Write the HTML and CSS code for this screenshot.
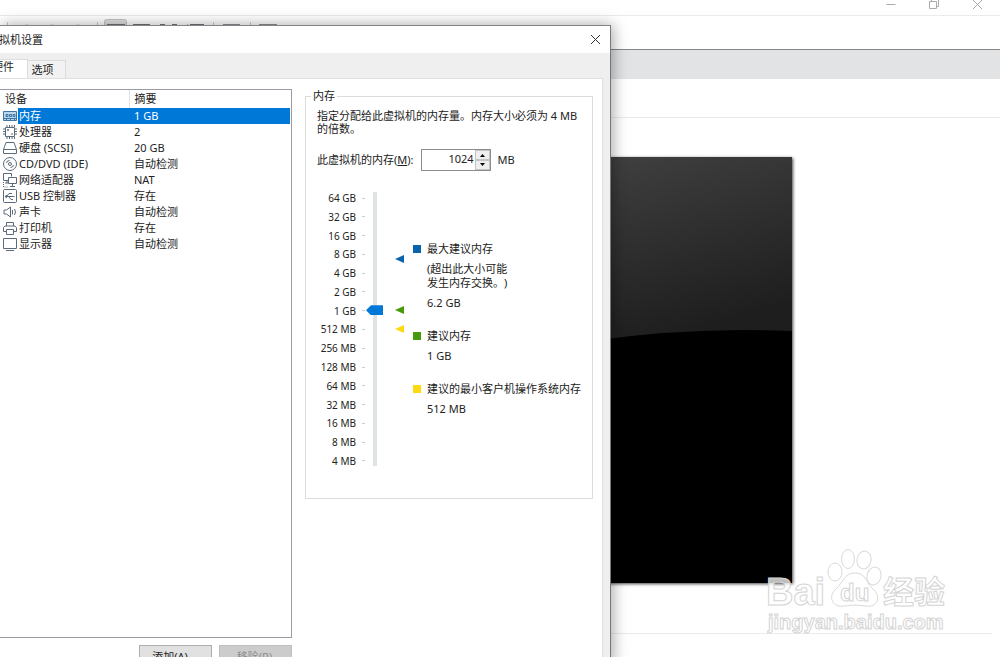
FILE: index.html
```html
<!DOCTYPE html>
<html lang="zh-CN">
<head>
<meta charset="utf-8">
<title>虚拟机设置</title>
<link rel="stylesheet" href="styles.css">
</head>
<body>
<div class="app">
  <header class="app-title">
    <button class="win-btn" aria-label="最小化"><svg width="12" height="12" viewBox="0 0 12 12"><path d="M1.500 4.500h9"/></svg></button>
    <button class="win-btn" aria-label="还原"><svg width="12" height="12" viewBox="0 0 12 12"><path d="M1.500 1.500h7v7h-7zM3.500 1.500v-2h7v7h-2"/></svg></button>
    <button class="win-btn" aria-label="关闭"><svg width="12" height="12" viewBox="0 0 12 12"><path d="M2 0l9 9M11 0l-9 9"/></svg></button>
  </header>
  <div class="toolbar">
    <svg width="300" height="28" viewBox="0 0 300 28">
      <rect x="104.500" y="3.500" width="22" height="24" rx="2" fill="#dedede" stroke="#c4c4c4"/>
      <g fill="none" stroke="#c8c8c8"><path d="M7.500 6v16M97.500 6v16M213.500 6v16M250.500 6v16"/><circle cx="27" cy="14" r="5"/><circle cx="52" cy="14" r="5"/><circle cx="78" cy="14" r="5"/></g>
      <g fill="none" stroke="#6d747c" stroke-width="2"><path d="M108 9h16v12h-16zM134 9h15v12h-15zM165 9h-4v5M172 9h4v5M190 9h13v12M187 9l4 4"/></g>
      <g fill="none" stroke="#8b9096" stroke-width="2"><path d="M224 9h15v12h-15zM260 9h16v12h-16z"/></g>
    </svg>
  </div>
  <div class="tabstrip"></div>
  <div class="vm-head"></div>
  <main class="vm-body">
    <svg class="preview" viewBox="0 0 200 426" preserveAspectRatio="none">
      <defs><linearGradient id="gloss" x1="0" y1="0" x2="0.300" y2="1"><stop offset="0" stop-color="#404040"/><stop offset="1" stop-color="#1e1e1e"/></linearGradient></defs>
      <rect width="200" height="426" fill="#000"/>
      <path d="M0 0H200V174Q96 170 0 184Z" fill="url(#gloss)"/>
    </svg>
  </main>
  <footer class="vm-foot"></footer>
</div>

<section class="dialog" role="dialog" aria-labelledby="dlg-title">
  <header class="dlg-title">
    <h1 id="dlg-title">虚拟机设置</h1>
    <button class="dlg-close" aria-label="关闭"><svg width="11" height="11" viewBox="0 0 11 11"><path d="M1 1l9 9M10 1l-9 9"/></svg></button>
  </header>
  <nav class="tabs">
    <button class="tab active">硬件</button>
    <button class="tab">选项</button>
  </nav>
  <div class="page">
    <div class="left">
      <div class="list">
        <table>
          <thead><tr><th>设备</th><th>摘要</th></tr></thead>
          <tbody>
            <tr class="selected"><td><span class="dev"><svg class="ic" viewBox="0 0 16 16"><path fill="#b9d6ee" d="M1.500 3.500h13v9h-13z"/><path d="M4 6.500h2v2H4zM7.500 6.500h2v2h-2zM11 6.500h2v2h-2zM1 10.500h14M4.500 11v2M8.500 11v2M12.500 11v2"/></svg><span>内存</span></span></td><td>1 GB</td></tr>
            <tr><td><span class="dev"><svg class="ic" viewBox="0 0 16 16"><path d="M3.500 3.500h9v9h-9zM5 1v2M7.500 1v2M10 1v2M12.500 1v2M5 13v2M7.500 13v2M10 13v2M12.500 13v2M1 5h2M1 7.500h2M1 10h2M13 5h2M13 7.500h2M13 10h2M5 6h2M6 5v2M9 10h2"/></svg><span>处理器</span></span></td><td>2</td></tr>
            <tr><td><span class="dev"><svg class="ic" viewBox="0 0 16 16"><path d="M4 2.500h8l2.500 7v4h-13v-4zM1.500 9.500h13"/></svg><span>硬盘 (SCSI)</span></span></td><td>20 GB</td></tr>
            <tr><td><span class="dev"><svg class="ic" viewBox="0 0 16 16"><circle cx="8" cy="8" r="6.500"/><circle cx="8" cy="8" r="1.500"/><path d="M4.500 7Q5 4.500 7.500 4.500M11.500 9Q11 11.500 8.500 11.500"/></svg><span>CD/DVD (IDE)</span></span></td><td>自动检测</td></tr>
            <tr><td><span class="dev"><svg class="ic" viewBox="0 0 16 16"><path d="M6.500 8.500h-5v-7h8v3M3 11h3M5 8.500v2.500M6.500 5.500h8v6h-8zM10.500 12v2M8 14.500h5"/><path stroke-dasharray="1 1" d="M1.500 10v5h5"/></svg><span>网络适配器</span></span></td><td>NAT</td></tr>
            <tr><td><span class="dev"><svg class="ic" viewBox="0 0 16 16"><rect x="1.500" y="1.500" width="13" height="13" rx="1"/><path d="M3.500 8.500h9M5 8l2-2.500h3M7 9l2 2.500h2M5 7L3 8.500 5 10"/></svg><span>USB 控制器</span></span></td><td>存在</td></tr>
            <tr><td><span class="dev"><svg class="ic" viewBox="0 0 16 16"><path d="M2 6h2.500L8.500 3v10l-4-3H2zM10.500 6v4.500M12.500 5Q14.500 8 12.500 11"/></svg><span>声卡</span></span></td><td>自动检测</td></tr>
            <tr><td><span class="dev"><svg class="ic" viewBox="0 0 16 16"><path d="M4.500 6V2.500h7V6M4 11.500H1.500v-4l1.500-1.500h10l1.500 1.500v4H12M4.500 9.500h7v5h-7z"/></svg><span>打印机</span></span></td><td>存在</td></tr>
            <tr><td><span class="dev"><svg class="ic" viewBox="0 0 16 16"><path d="M1.500 2.500h13v10h-13zM4 14.500h8"/></svg><span>显示器</span></span></td><td>自动检测</td></tr>
          </tbody>
        </table>
      </div>
      <div class="actions">
        <button class="btn">添加(<u>A</u>)...</button>
        <button class="btn" disabled>移除(<u>R</u>)</button>
      </div>
    </div>

    <fieldset class="group">
      <legend>内存</legend>
      <p class="hint">指定分配给此虚拟机的内存量。内存大小必须为 4 MB 的倍数。</p>
      <div class="amount">
        <label for="mem">此虚拟机的内存(<u>M</u>):</label>
        <span class="spin">
          <input id="mem" type="text" value="1024">
          <span class="spin-btns">
            <button aria-label="增加"><svg width="7" height="4" viewBox="0 0 7 4"><path d="M1 4h5L3.500 1z"/></svg></button>
            <button aria-label="减少"><svg width="7" height="4" viewBox="0 0 7 4"><path d="M1 0h5L3.500 3z"/></svg></button>
          </span>
        </span>
        <span>MB</span>
      </div>
      <div class="chooser">
        <ol class="scale">
          <li>64 GB</li><li>32 GB</li><li>16 GB</li><li>8 GB</li><li>4 GB</li><li>2 GB</li><li>1 GB</li><li>512 MB</li><li>256 MB</li><li>128 MB</li><li>64 MB</li><li>32 MB</li><li>16 MB</li><li>8 MB</li><li>4 MB</li>
        </ol>
        <input class="slider" type="range" min="0" max="14" value="8" aria-label="内存大小">
        <svg class="marks" width="9" height="274" viewBox="0 0 9 274">
          <path d="M0 67l9-4v8z" fill="#0963ad"/><path d="M0 118l9-4v8z" fill="#469a0c"/><path d="M0 137l9-4v8z" fill="#ffd90f"/>
        </svg>
        <dl class="legend">
          <div class="item max"><dt>最大建议内存</dt><dd>(超出此大小可能<br>发生内存交换。)</dd><dd>6.2 GB</dd></div>
          <div class="item rec"><dt>建议内存</dt><dd>1 GB</dd></div>
          <div class="item min"><dt>建议的最小客户机操作系统内存</dt><dd>512 MB</dd></div>
        </dl>
      </div>
    </fieldset>
  </div>
</section>

<svg class="watermark" width="190" height="96" viewBox="0 0 190 96">
  <g fill="#fff" fill-opacity=".75" stroke="#d9d9d9">
    <ellipse cx="73" cy="27" rx="7" ry="9"/>
    <ellipse cx="86" cy="14" rx="6.500" ry="9.500"/>
    <ellipse cx="102" cy="15" rx="7" ry="9" transform="rotate(10 102 15)"/>
    <ellipse cx="112" cy="31" rx="7" ry="9" transform="rotate(15 112 31)"/>
    <path d="M93 28C82 28 81 38 74 44C65 52 71 63 82 61Q93 59 104 61C115 63 120 52 111 44C104 38 104 28 93 28Z"/>
  </g>
  <g class="wm-text">
    <text x="4" y="60" font-size="38">Bai</text>
    <text x="78" y="56" font-size="24">du</text>
    <text x="121" y="58" font-size="31">经验</text>
    <text x="6" y="84" font-size="20">jingyan.baidu.com</text>
  </g>
</svg>
</body>
</html>
```
FILE: styles.css
```css
* { box-sizing: border-box; }
html, body { height: 100%; }
body {
  margin: 0;
  overflow: hidden;
  position: relative;
  background: #fff;
  color: #222;
  font: 11px/14px "Noto Sans", "Noto Sans CJK SC", sans-serif;
  text-spacing-trim: space-all;
}
button, input { font: inherit; color: inherit; }
button { padding: 0; border: 0; background: none; white-space: nowrap; }

.app { height: 100%; display: flex; flex-direction: column; }
.app-title {
  height: 16px;
  flex: none;
  display: flex;
  justify-content: flex-end;
  align-items: flex-start;
  gap: 31px;
  padding-right: 17px;
  border-bottom: 1px solid #ebebeb;
}
.win-btn { height: 12px; width: 12px; line-height: 0; }
.win-btn svg { fill: none; stroke: #aaa; overflow: visible; }
.toolbar { height: 34px; flex: none; border-bottom: 1px solid #858789; }
.tabstrip { height: 29px; flex: none; background: #e2e3e5; }
.vm-head { height: 39px; flex: none; border-bottom: 1px solid #ebebeb; }
.vm-body { flex: 1; padding: 39px 20.8% 50px 59.2%; display: flex; min-height: 0; }
.preview { width: 100%; height: 100%; box-shadow: 1px 1px 3px #444; }
.vm-foot { height: 24px; flex: none; margin-right: 8px; border-top: 1px solid #ebebeb; }

.dialog {
  position: absolute;
  inset: 25px 38.900% -9px 0;
  display: flex;
  flex-direction: column;
  background: #efefef;
  border-top: 1px solid #848484;
  border-right: 1px solid #777;
  box-shadow: 2px 0 14px rgba(0, 0, 0, .35);
}
.dlg-title {
  height: 27px;
  flex: none;
  display: flex;
  align-items: center;
  justify-content: space-between;
  padding-right: 9px;
  background: #fff;
}
.dlg-title h1 { margin: 0 0 0 -12px; font-size: 11px; font-weight: 400; }
.dlg-close { width: 11px; height: 11px; line-height: 0; }
.dlg-close svg { fill: none; stroke: #333; }
.tabs { height: 25px; flex: none; display: flex; align-items: flex-end; }
.tab { height: 18px; width: 38px; padding-right: 8px; border: 1px solid #dcdcdc; border-bottom: 0; border-left: 0; background: #f2f2f2; }
.tab.active { height: 19px; width: 28px; padding-right: 13px; background: #fff; display: flex; justify-content: flex-end; }
.page {
  flex: 1;
  min-height: 0;
  margin-right: 7px;
  padding: 10px 9px 0 0;
  display: flex;
  gap: 13px;
  background: #fff;
  border: 1px solid #dfdfdf;
  border-left: 0;
}
.left { width: 292px; flex: none; display: flex; flex-direction: column; min-height: 0; }
.list { flex: 1; min-height: 0; border: 1px solid #9b9ba5; border-left: 0; padding-right: 1px; }
.list table { width: 100%; border-collapse: collapse; table-layout: fixed; }
.list th, .list td { padding: 0 0 0 5px; text-align: left; font-weight: 400; height: 16px; line-height: 16px; }
.list th { height: 18px; }
.list th:first-child { width: 129px; border-right: 1px solid #e2e2e2; }
.list td:first-child { padding-left: 2px; }
.dev { display: flex; align-items: center; }
.dev > span { flex: 1; padding-left: 1px; }
.ic { width: 16px; height: 16px; flex: none; fill: none; stroke: #5c6b7a; }
.selected { color: #fff; }
.selected td:last-child, .selected .dev > span { background: #0078d7; }
.selected .ic { stroke: #3d75a5; }
.actions { flex: none; display: flex; justify-content: flex-end; gap: 7px; padding-top: 7px; margin-bottom: -4px; }
.btn { width: 73px; height: 24px; background: #e1e1e1; border: 1px solid #adadad; padding-right: 2px; }
.btn:disabled { background: #ccc; border-color: #bfbfbf; color: #8d8d8d; }

.group {
  flex: 1;
  min-width: 0;
  align-self: flex-start;
  margin: 0;
  padding: 6px 12px 30px 11px;
  border: 1px solid #dcdcdc;
}
.group legend { margin-left: -6px; padding: 0 2px; }
.hint { margin: 0; line-height: 13px; }
.amount { display: flex; align-items: center; gap: 7px; margin-top: 14px; }
.spin { display: flex; width: 70px; height: 22px; border: 1px solid #8c8c8c; }
.spin input { flex: 1; min-width: 0; border: 0; padding: 0 1px 3px 0; text-align: right; background: #fff; }
.spin-btns { width: 15px; display: flex; flex-direction: column; }
.spin-btns button { flex: 1; background: #eee; border: 1px solid #c4c4c4; display: flex; align-items: center; justify-content: center; }
.chooser { display: flex; align-items: flex-start; margin-top: 21px; }
.scale {
  height: 277px;
  width: 48px;
  flex: none;
  margin: -1px 0 0;
  padding: 0;
  font-size: 10px;
  list-style: none;
  display: flex;
  flex-direction: column;
  justify-content: space-between;
}
.scale li { display: flex; justify-content: flex-end; align-items: center; gap: 6px; white-space: nowrap; }
.scale li::after { content: ""; width: 3px; height: 1px; background: #ccc; }
.slider {
  appearance: none;
  writing-mode: vertical-lr;
  direction: rtl;
  width: 17px;
  height: 274px;
  flex: none;
  margin: 0 0 0 1px;
  background: linear-gradient(#dfe3e3, #dfe3e3) no-repeat 7px 0 / 4px 100%;
}
.slider::-webkit-slider-thumb {
  appearance: none;
  width: 17px;
  height: 10px;
  background: #0078d7;
  clip-path: polygon(0 50%, 5px 0, 100% 0, 100% 100%, 5px 100%);
}
.marks { flex: none; margin-left: 12px; }
.legend { margin: 50px 0 0 9px; white-space: nowrap; }
.item { margin-bottom: 19px; }
.legend dt { display: flex; align-items: center; gap: 6px; }
.legend dt::before { content: ""; width: 8px; height: 8px; }
.legend dd { margin: 6px 0 0 14px; }
.max dt::before { background: #0963ad; }
.rec dt::before { background: #469a0c; }
.min dt::before { background: #ffd90f; }

.watermark { position: absolute; right: 48px; bottom: 16px; pointer-events: none; overflow: visible; }
.wm-text {
  font-family: "Liberation Sans", "Noto Sans CJK SC", sans-serif;
  font-weight: 700;
  fill: #fff;
  fill-opacity: .75;
  stroke: #d4d4d4;
  stroke-width: 1px;
}
```
